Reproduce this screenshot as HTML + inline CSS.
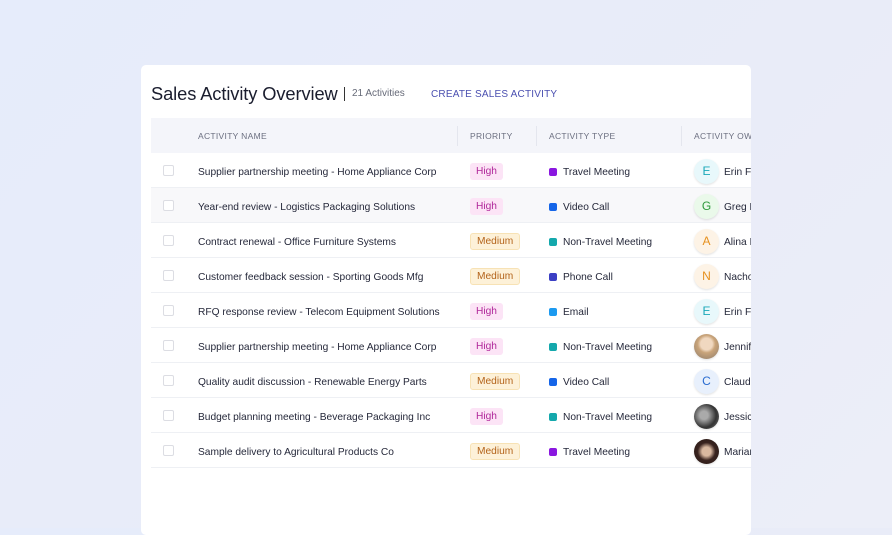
<!DOCTYPE html>
<html><head><meta charset="utf-8"><style>
*{box-sizing:border-box;margin:0;padding:0}
body{width:892px;height:528px;overflow:hidden;background:linear-gradient(135deg,#e6ecfb 0%,#e9ecf8 60%,#eceef8 100%);font-family:"Liberation Sans",sans-serif;position:relative}
.card{position:absolute;left:141px;top:65px;width:610px;height:470px;background:#fff;border-radius:5px;overflow:hidden}
.title{position:absolute;left:10px;top:18px;font-size:18.3px;color:#1a1d2e;letter-spacing:-0.1px}
.sep{position:absolute;left:203px;top:22px;width:1px;height:14px;background:#333}
.count{position:absolute;left:211px;top:23px;font-size:10px;color:#666a78}
.create{position:absolute;left:290px;top:24px;font-size:10px;color:#4a4fb0;letter-spacing:0.2px}
.thead{position:absolute;left:10px;top:53px;width:600px;height:35px;background:#f4f5fa}
.th{position:absolute;top:13px;font-size:8.5px;color:#6b6f80;letter-spacing:0.3px;white-space:nowrap}
.vd{position:absolute;top:8px;width:1px;height:20px;background:#e4e6ee}
.row{position:absolute;left:10px;width:600px;height:35px;border-bottom:1px solid #eef0f4}
.cb{position:absolute;left:12px;top:12px;width:11px;height:11px;border:1px solid #dcdde3;border-radius:2px;background:#fff}
.nm{position:absolute;left:47px;top:14px;font-size:10.2px;color:#25283a;white-space:nowrap}
.pr{position:absolute;left:319px;top:10px;height:17px;padding:0 6px;line-height:17px;font-size:10.2px;border-radius:3px}
.hi{background:#fce4f6;color:#b0269a}
.me{background:#fdf1d8;color:#b3631a;border:1px solid #f7e2b5;line-height:15px}
.ty{position:absolute;left:398px;top:14px;font-size:10.2px;color:#25283a;white-space:nowrap}
.dot{display:inline-block;width:8px;height:8px;border-radius:2px;margin-right:6px;vertical-align:-1px}
.av{position:absolute;left:543px;top:6px;width:25px;height:25px;border-radius:50%;text-align:center;line-height:25px;font-size:12px;box-shadow:0 1px 2px rgba(0,0,0,.12)}
.ow{position:absolute;left:573px;top:14px;font-size:10.2px;color:#25283a;white-space:nowrap}
</style></head><body>
<div class="card">
<div class="title">Sales Activity Overview</div>
<div class="sep"></div>
<div class="count">21 Activities</div>
<div class="create">CREATE SALES ACTIVITY</div>
<div class="thead">
<div class="th" style="left:47px">ACTIVITY NAME</div>
<div class="vd" style="left:306px"></div>
<div class="th" style="left:319px">PRIORITY</div>
<div class="vd" style="left:385px"></div>
<div class="th" style="left:398px">ACTIVITY TYPE</div>
<div class="vd" style="left:530px"></div>
<div class="th" style="left:543px">ACTIVITY OWNER</div>
</div>

<div class="row" style="top:88px"><div class="cb"></div><div class="nm">Supplier partnership meeting - Home Appliance Corp</div><div class="pr hi">High</div><div class="ty"><span class="dot" style="background:#8a17e0"></span>Travel Meeting</div><div class="av" style="background:#e8f8fb;color:#1aa8b8">E</div><div class="ow">Erin Fr</div></div>
<div class="row" style="top:123px;background:#f8f8fa"><div class="cb"></div><div class="nm">Year-end review - Logistics Packaging Solutions</div><div class="pr hi">High</div><div class="ty"><span class="dot" style="background:#1565e8"></span>Video Call</div><div class="av" style="background:#eaf9ea;color:#2e9a3c">G</div><div class="ow">Greg F</div></div>
<div class="row" style="top:158px"><div class="cb"></div><div class="nm">Contract renewal - Office Furniture Systems</div><div class="pr me">Medium</div><div class="ty"><span class="dot" style="background:#14a8ac"></span>Non-Travel Meeting</div><div class="av" style="background:#fdf3e6;color:#e6901e">A</div><div class="ow">Alina I</div></div>
<div class="row" style="top:193px"><div class="cb"></div><div class="nm">Customer feedback session - Sporting Goods Mfg</div><div class="pr me">Medium</div><div class="ty"><span class="dot" style="background:#3b3fc4"></span>Phone Call</div><div class="av" style="background:#fdf3e6;color:#e6901e">N</div><div class="ow">Nacho</div></div>
<div class="row" style="top:228px"><div class="cb"></div><div class="nm">RFQ response review - Telecom Equipment Solutions</div><div class="pr hi">High</div><div class="ty"><span class="dot" style="background:#1c9af0"></span>Email</div><div class="av" style="background:#e8f8fb;color:#1aa8b8">E</div><div class="ow">Erin Fr</div></div>
<div class="row" style="top:263px"><div class="cb"></div><div class="nm">Supplier partnership meeting - Home Appliance Corp</div><div class="pr hi">High</div><div class="ty"><span class="dot" style="background:#14a8ac"></span>Non-Travel Meeting</div><div class="av" style="background:radial-gradient(circle at 50% 40%,#f0d8c0 0 30%,#c9a47a 45%,#8b7a6a 100%)"></div><div class="ow">Jennif</div></div>
<div class="row" style="top:298px"><div class="cb"></div><div class="nm">Quality audit discussion - Renewable Energy Parts</div><div class="pr me">Medium</div><div class="ty"><span class="dot" style="background:#1565e8"></span>Video Call</div><div class="av" style="background:#e8f0fc;color:#2a6cd0">C</div><div class="ow">Claud</div></div>
<div class="row" style="top:333px"><div class="cb"></div><div class="nm">Budget planning meeting - Beverage Packaging Inc</div><div class="pr hi">High</div><div class="ty"><span class="dot" style="background:#14a8ac"></span>Non-Travel Meeting</div><div class="av" style="background:radial-gradient(circle at 40% 45%,#aaa 0 20%,#333 60%,#777 100%)"></div><div class="ow">Jessic</div></div>
<div class="row" style="top:368px"><div class="cb"></div><div class="nm">Sample delivery to Agricultural Products Co</div><div class="pr me">Medium</div><div class="ty"><span class="dot" style="background:#8a17e0"></span>Travel Meeting</div><div class="av" style="background:radial-gradient(circle at 50% 50%,#d9b8a0 0 25%,#3a2420 50%,#241612 100%)"></div><div class="ow">Mariar</div></div>
</div>
</body></html>
